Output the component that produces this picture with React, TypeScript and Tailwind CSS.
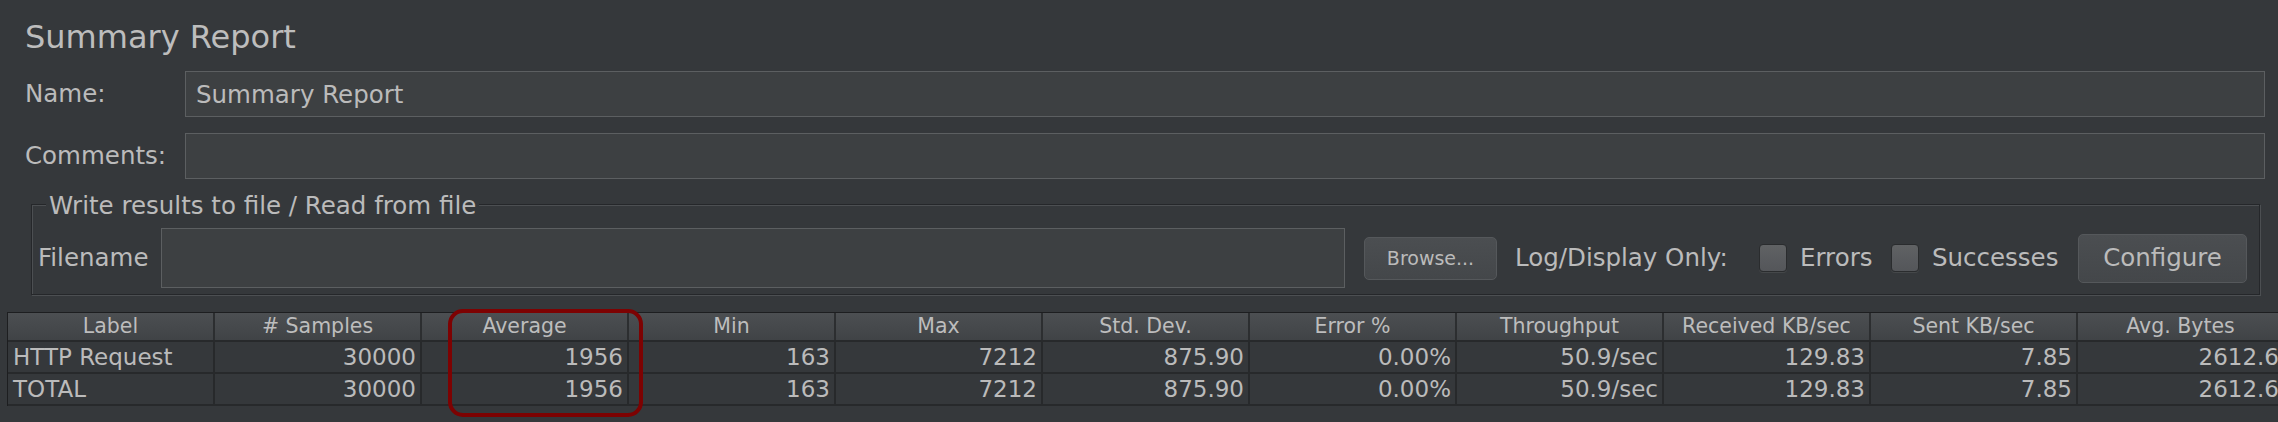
// JMeter "Summary Report" listener, Darcula look.
// Header form (name / comments), the "write results to file" group, and the
// aggregate table with the Average column circled.

const COLUMNS = [
  'Label',
  '# Samples',
  'Average',
  'Min',
  'Max',
  'Std. Dev.',
  'Error %',
  'Throughput',
  'Received KB/sec',
  'Sent KB/sec',
  'Avg. Bytes',
];

const ROWS: string[][] = [
  ['HTTP Request', '30000', '1956', '163', '7212', '875.90', '0.00%', '50.9/sec', '129.83', '7.85', '2612.6'],
  ['TOTAL', '30000', '1956', '163', '7212', '875.90', '0.00%', '50.9/sec', '129.83', '7.85', '2612.6'],
];

function FormRow({ label, value, className }: { label: string; value?: string; className?: string }) {
  return (
    <div className={`flex h-[46px] items-center pl-[25px] pr-[13px] ${className ?? ''}`}>
      <span className="w-[160px] shrink-0 text-[24.5px] leading-none">{label}</span>
      <input
        readOnly
        defaultValue={value ?? ''}
        className="h-full min-w-0 flex-1 border border-[#5c5f61] bg-[#3d4042] pl-[10px] text-[24.5px] leading-none text-[#bbbbbb] outline-none"
      />
    </div>
  );
}

function Checkbox({ className }: { className?: string }) {
  return (
    <span
      className={`size-[28px] shrink-0 rounded-[4px] border border-[#2a2c2e] bg-linear-to-b from-[#606264] to-[#54565a] shadow-[0_1px_0_#45484a] ${className ?? ''}`}
    />
  );
}

function FileGroup() {
  return (
    <fieldset className="ml-[31px] mr-[18px] mt-[13px] border border-[#25272a] pb-[6px] pl-[6px] pr-[12px] pt-[12px] shadow-[inset_1px_1px_0_#4c4f52,1px_1px_0_#4c4f52]">
      <legend className="ml-[8px] bg-[#35383b] px-[3px] text-[24.5px] leading-[24px]">
        <span className="relative top-[2px]">Write results to file / Read from file</span>
      </legend>
      <div className="flex h-[60px] items-center">
        <span className="w-[123px] shrink-0 text-[24.5px] leading-none">Filename</span>
        <input
          readOnly
          className="h-full min-w-0 flex-1 border border-[#5c5f61] bg-[#3d4042] outline-none"
        />
        <button
          type="button"
          className="ml-[19px] h-[43px] w-[133px] shrink-0 rounded-[5px] border border-[#55585b] bg-linear-to-b from-[#4b4e51] to-[#44474a] text-[19px] leading-none text-[#bbbbbb]"
        >
          Browse...
        </button>
        <span className="ml-[18px] w-[226px] shrink-0 whitespace-nowrap text-[24.5px] leading-none">
          Log/Display Only:
        </span>
        <Checkbox className="ml-[18px]" />
        <span className="ml-[13px] w-[71px] shrink-0 text-[24.5px] leading-none">Errors</span>
        <Checkbox className="ml-[20px]" />
        <span className="ml-[13px] w-[126px] shrink-0 text-[24.5px] leading-none">Successes</span>
        <button
          type="button"
          className="ml-[20px] h-[49px] w-[169px] shrink-0 rounded-[5px] border border-[#55585b] bg-linear-to-b from-[#4b4e51] to-[#44474a] text-[24.5px] leading-none text-[#bbbbbb]"
        >
          Configure
        </button>
      </div>
    </fieldset>
  );
}

function ResultsTable() {
  return (
    <div className="relative ml-[7px] mt-[17px] border-l border-t border-[#1d1e20]">
      <div className="flex h-[29px] border-b-2 border-[#27292b] bg-linear-to-b from-[#4c4f52] to-[#404346]">
        {COLUMNS.map((c) => (
          <div
            key={c}
            className="flex w-[207px] shrink-0 items-center justify-center border-r-2 border-[#2c2e30] text-[20.5px] leading-none text-[#bdbdbd]"
          >
            {c}
          </div>
        ))}
      </div>
      {ROWS.map((row) => (
        <div key={row[0]} className="flex h-[32px] border-b-2 border-[#27292b]">
          {row.map((cell, i) => (
            <div
              key={i}
              className={`flex w-[207px] shrink-0 items-center border-r-2 border-[#27292b] text-[23px] leading-none ${
                i === 0 ? 'justify-start pl-[5px]' : 'justify-end pr-[4px]'
              }`}
            >
              {cell}
            </div>
          ))}
        </div>
      ))}
      {/* hand-drawn highlight round the Average column */}
      <div className="absolute left-[440px] top-[-4px] h-[108px] w-[195px] rounded-[15px] border-4 border-[#7d0202]" />
    </div>
  );
}

export default function App() {
  return (
    <div className="h-[422px] w-[2278px] overflow-hidden bg-[#35383b] pt-[20px] font-['DejaVu_Sans',sans-serif] text-[#bbbbbb]">
      <h1 className="flex h-[33px] items-center pl-[25px] text-[32px] font-normal leading-none text-[#bdbdbd]">
        Summary Report
      </h1>
      <FormRow label="Name:" value="Summary Report" className="mt-[18px]" />
      <FormRow label="Comments:" className="mt-[16px]" />
      <FileGroup />
      <ResultsTable />
    </div>
  );
}
